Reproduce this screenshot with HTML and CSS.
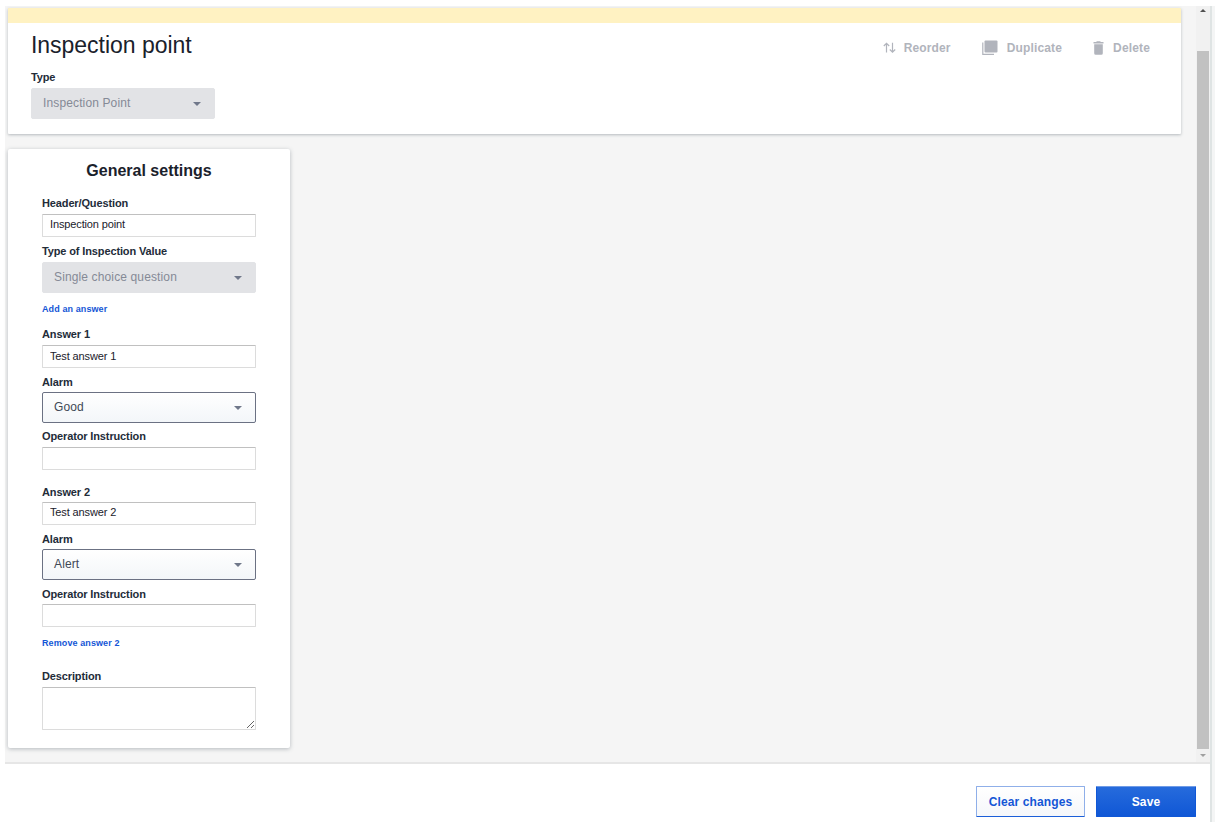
FILE: index.html
```html
<!DOCTYPE html>
<html lang="en">

<head>
    <meta charset="UTF-8">
    <meta name="viewport" content="width=device-width, initial-scale=1.0">
    <title>Inspection point</title>
    <link rel="stylesheet" href="styles.css">
</head>

<body>
    <div class="app">
        <div class="main">
            <div class="workspace">
                <div class="content">
                    <div class="header">
                        <div class="header-info">
                            <h1>Inspection point</h1>
                            <label>Type</label>
                            <div class="select type-select disabled">
                                <span>Inspection Point</span>
                                <i class="arrow"></i>
                            </div>
                        </div>
                        <div class="actions">
                            <div class="action reorder">
                                <svg width="14" height="12" viewBox="0 0 14 12" fill="none" stroke="#b1b4bc" stroke-width="1.2">
                                    <path d="M3.5 10.5V1.5M0.8 4L3.5 1.3L6.2 4M9.5 0.8V10M6.8 7.5L9.5 10.2L12.2 7.5" />
                                </svg>
                                <span>Reorder</span>
                            </div>
                            <div class="action duplicate">
                                <svg width="16" height="16" viewBox="0 0 16 16">
                                    <rect x="2.5" y="0.5" width="13" height="12" rx="1" fill="#b1b4bc" />
                                    <path d="M0.8 2.5V14.4H12" fill="none" stroke="#b1b4bc" stroke-width="1.2" />
                                </svg>
                                <span>Duplicate</span>
                            </div>
                            <div class="action delete">
                                <svg width="11" height="14" viewBox="0 0 11 14" fill="#b1b4bc">
                                    <path d="M0.5 1H3L4 0.2H7L8 1H10.5V2.4H0.5ZM1.2 3.3H9.8V12.3Q9.8 13.8 8.3 13.8H2.7Q1.2 13.8 1.2 12.3Z" />
                                </svg>
                                <span>Delete</span>
                            </div>
                        </div>
                    </div>

                    <div class="settings">
                        <h2>General settings</h2>
                        <div class="field">
                            <label for="question">Header/Question</label>
                            <input type="text" id="question" class="raised" value="Inspection point">
                        </div>
                        <div class="field value-type">
                            <label>Type of Inspection Value</label>
                            <div class="select disabled">
                                <span>Single choice question</span>
                                <i class="arrow"></i>
                            </div>
                        </div>
                        <a class="link add-link">Add an answer</a>

                        <div class="answer">
                            <div class="field">
                                <label for="answer1">Answer 1</label>
                                <input type="text" id="answer1" value="Test answer 1">
                            </div>
                            <div class="field select-field">
                                <label>Alarm</label>
                                <div class="select">
                                    <span>Good</span>
                                    <i class="arrow"></i>
                                </div>
                            </div>
                            <div class="field">
                                <label for="instruction1">Operator Instruction</label>
                                <input type="text" id="instruction1" value="">
                            </div>
                        </div>

                        <div class="answer second">
                            <div class="field">
                                <label for="answer2">Answer 2</label>
                                <input type="text" id="answer2" class="raised" value="Test answer 2">
                            </div>
                            <div class="field select-field">
                                <label>Alarm</label>
                                <div class="select">
                                    <span>Alert</span>
                                    <i class="arrow"></i>
                                </div>
                            </div>
                            <div class="field">
                                <label for="instruction2">Operator Instruction</label>
                                <input type="text" id="instruction2" value="">
                            </div>
                            <a class="link">Remove answer 2</a>
                        </div>

                        <div class="field description">
                            <label for="description">Description</label>
                            <textarea id="description"></textarea>
                        </div>
                    </div>
                </div>

                <div class="scrollbar">
                    <i class="scroll-up"></i>
                    <div class="thumb"></div>
                    <i class="scroll-down"></i>
                </div>
            </div>

            <div class="footer">
                <button class="clear-btn">Clear changes</button>
                <button class="save-btn">Save</button>
            </div>
        </div>
        <div class="edge"></div>
    </div>
</body>

</html>
```
FILE: styles.css
```css
* {
    box-sizing: border-box;
}

body {
    margin: 0;
    padding: 6px 0 0 5px;
    height: 827px;
    overflow: hidden;
    background-color: #ffffff;
    font-family: "Liberation Sans", Arial, sans-serif;
    color: #1a212b;
}

.app {
    display: flex;
    height: 816px;
}

.main {
    width: 1205px;
}

.edge {
    flex: 1;
    background-color: #f4f5f5;
    border-left: 2px solid #dfe4e4;
}

.workspace {
    display: flex;
    height: 758px;
    background-color: #f5f5f5;
    border-bottom: 2px solid #e6e6e6;
}

.content {
    flex: 1;
    padding: 2px 15px 0 3px;
}

.header {
    display: flex;
    justify-content: space-between;
    height: 126px;
    padding: 9px 31px 0 23px;
    background-color: #ffffff;
    border-top: 15px solid #fff2c2;
    border-radius: 1px;
    box-shadow: 0 1px 3px rgba(60, 75, 85, 0.35);
}

h1 {
    margin: 0 0 10px;
    font-size: 23px;
    line-height: 27px;
    font-weight: normal;
    letter-spacing: -0.03px;
}

label {
    display: block;
    color: #232c39;
    font-size: 11px;
    line-height: 16px;
    font-weight: bold;
    letter-spacing: -0.13px;
}

.select {
    display: flex;
    align-items: center;
    justify-content: space-between;
    height: 31px;
    padding: 0 13px 2px 11px;
    border: 1px solid #6b7183;
    border-radius: 2px;
    background: linear-gradient(#ffffff, #f3f6f9);
    color: #414956;
    font-size: 12px;
    letter-spacing: 0.13px;
}

.select.disabled {
    background: #e2e3e6;
    border-color: #e2e3e6;
    color: #858a96;
}

.type-select {
    width: 184px;
    margin-top: 3px;
}

.arrow {
    margin-top: 2px;
    border: 4px solid transparent;
    border-top-color: #70788a;
    border-bottom: 0;
}

.actions {
    display: flex;
    height: 31px;
    align-items: center;
}

.action {
    display: flex;
    align-items: center;
    color: #b1b4bc;
    font-size: 12px;
    font-weight: bold;
    letter-spacing: 0.15px;
}

.reorder span {
    margin-left: 7px;
}

.duplicate {
    margin-left: 31px;
}

.duplicate span {
    margin-left: 9px;
}

.delete {
    margin-left: 31px;
}

.delete span {
    margin-left: 9px;
}

.settings {
    width: 282px;
    height: 599px;
    margin-top: 15px;
    padding: 12px 34px 0;
    background-color: #ffffff;
    border-radius: 2px;
    box-shadow: 0 1px 4px rgba(60, 75, 85, 0.35);
}

h2 {
    margin: 0 0 14px;
    font-size: 16px;
    line-height: 20px;
    text-align: center;
}

.field {
    margin-bottom: 6px;
}

.field input,
.field textarea {
    display: block;
    width: 100%;
    height: 23px;
    margin: 3px 0 0;
    padding: 0 7px 2px;
    border: 1px solid #dcdcdc;
    border-top-color: #c0c0c0;
    border-radius: 1px;
    background-color: #ffffff;
    color: #1a212b;
    font-family: inherit;
    font-size: 11px;
    letter-spacing: -0.13px;
}

.field input.raised {
    padding-bottom: 4px;
}

.field .select {
    margin-top: 2px;
}

.select-field {
    margin-bottom: 5px;
}

.value-type .select {
    margin-top: 3px;
}

.value-type {
    margin-bottom: 8px;
}

.link {
    display: block;
    color: #1456d6;
    font-size: 9px;
    line-height: 16px;
    font-weight: bold;
    letter-spacing: 0.1px;
}

.add-link {
    margin-bottom: 9px;
}

.second {
    margin-top: 14px;
}

.second .field input {
    margin-top: 2px;
}

.second .select-field {
    margin-bottom: 6px;
}

.second .link {
    margin-top: 8px;
}

.description {
    margin-top: 17px;
}

.field textarea {
    height: 43px;
}

.scrollbar {
    display: flex;
    flex-direction: column;
    align-items: center;
    width: 14px;
    background-color: #f1f1f1;
}

.scroll-up {
    margin-top: 3px;
    border: 3px solid transparent;
    border-bottom-color: #505050;
    border-top: 0;
}

.thumb {
    width: 12px;
    height: 698px;
    margin-top: 39px;
    background-color: #c1c1c1;
}

.scroll-down {
    margin-top: 5px;
    border: 3px solid transparent;
    border-top-color: #a0a0a0;
    border-bottom: 0;
}

.footer {
    display: flex;
    justify-content: flex-end;
    gap: 11px;
    padding: 22px 14px 0 0;
}

.footer button {
    height: 31px;
    padding: 0;
    border-radius: 1px;
    font-family: inherit;
    font-size: 12px;
    font-weight: bold;
    letter-spacing: 0.12px;
}

.footer .clear-btn {
    width: 109px;
    background: linear-gradient(#ffffff, #f5f7fa);
    border: 1px solid #8fafe9;
    border-bottom-color: #1c5fd8;
    color: #1456d6;
}

.footer .save-btn {
    width: 100px;
    background: linear-gradient(#266bdc, #1057d6);
    border: 1px solid #1057d6;
    border-top-color: #6f9be6;
    color: #ffffff;
}
```
